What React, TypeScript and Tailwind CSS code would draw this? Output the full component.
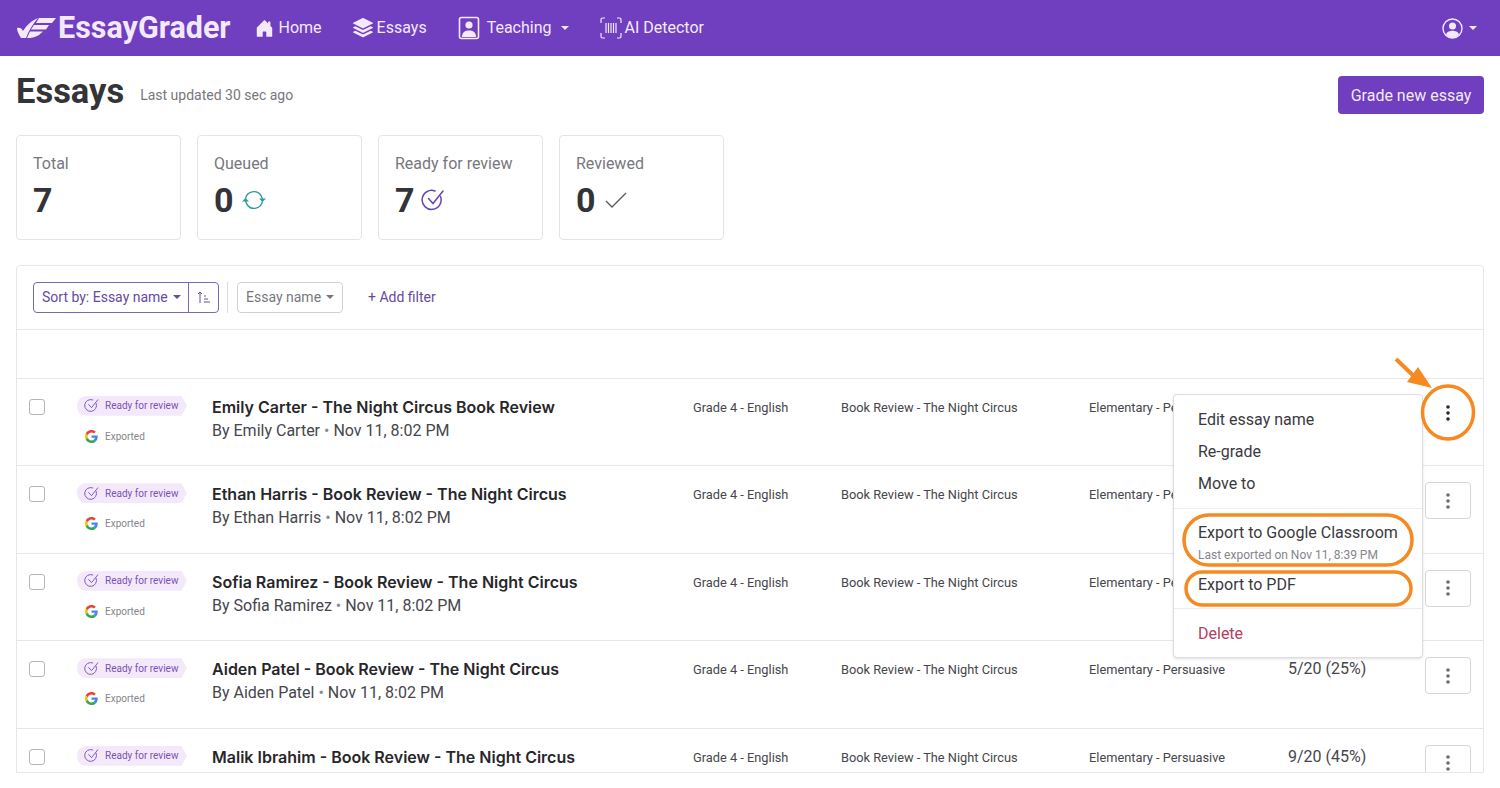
import { BsHouseDoorFill, BsStack } from 'react-icons/bs';

const essays = [
  { title: 'Emily Carter - The Night Circus Book Review', author: 'Emily Carter', score: '' },
  { title: 'Ethan Harris - Book Review - The Night Circus', author: 'Ethan Harris', score: '' },
  { title: 'Sofia Ramirez - Book Review - The Night Circus', author: 'Sofia Ramirez', score: '' },
  { title: 'Aiden Patel - Book Review - The Night Circus', author: 'Aiden Patel', score: '5/20 (25%)' },
  { title: 'Malik Ibrahim - Book Review - The Night Circus', author: 'Malik Ibrahim', score: '9/20 (45%)' },
];

const Caret = ({ className = '' }: { className?: string }) => (
  <span className={`inline-block w-0 h-0 border-x-[4.5px] border-x-transparent border-t-[4.5px] ${className}`} />
);

const Logo = () => (
  <svg width="40" height="22" viewBox="0 0 40 22" fill="#f3e9fb">
    <path d="M1 11C3 10 6 11 7 14C10 9 15 4 22 1C17 7 13 13 10 21L5 21C3 18 1 14 1 11Z" />
    <path d="M23 1H40L36 6H20Z" />
    <path d="M18 8H33L30 12.500H15Z" />
    <path d="M14 14.500H27L23 18C19 20.500 15 21 11 21Z" />
  </svg>
);

const TeachingIcon = () => (
  <svg width="22" height="24" viewBox="0 0 22 24" fill="none">
    <rect x="1.500" y="1.500" width="19" height="21" rx="2" stroke="#f3e9fb" strokeWidth="1.600" />
    <circle cx="11" cy="9" r="3.600" fill="#f3e9fb" />
    <path d="M4 21C4 16 7 14.500 11 14.500C15 14.500 18 16 18 21Z" fill="#f3e9fb" />
  </svg>
);

const DetectorIcon = () => (
  <svg width="22" height="22" viewBox="0 0 22 22" fill="none" stroke="#f3e9fb" strokeWidth="1.200">
    <path d="M5 1H2.500A1.500 1.500 0 0 0 1 2.500V6M17 1h2.500A1.500 1.500 0 0 1 21 2.500V6M5 21H2.500A1.500 1.500 0 0 1 1 19.500V16M17 21h2.500a1.500 1.500 0 0 0 1.500-1.500V16" />
    <path d="M6 6v10M8.500 6v10M11 6v10M13.500 6v10M16 6v10" />
  </svg>
);

const UserCircle = () => (
  <svg width="21" height="21" viewBox="0 0 21 21" fill="none">
    <circle cx="10.500" cy="10.500" r="9.500" stroke="#f3e9fb" strokeWidth="1.400" />
    <circle cx="10.500" cy="8" r="3.500" fill="#f3e9fb" />
    <path d="M4 16.500C5 13.500 8 12.800 10.500 12.800C13 12.800 16 13.500 17 16.500C15 19 12.500 20 10.500 20C8.500 20 6 19 4 16.500Z" fill="#f3e9fb" />
  </svg>
);

const CheckCircleIcon = ({ size, color }: { size: number; color: string }) => (
  <svg width={size} height={size} viewBox="0 0 24 24" fill="none" stroke={color} strokeWidth="1.500" strokeLinecap="round">
    <path d="M19.500 8.500A9.500 9.500 0 1 1 14 3" />
    <path d="M7.500 10.500l4.500 5L22 3" />
  </svg>
);

const SyncIcon = () => (
  <svg width="24" height="24" viewBox="0 0 24 24" fill="none" stroke="#2a9d9d" strokeWidth="1.400">
    <path d="M3.500 11A8.500 8.500 0 0 1 19 7.500L20.500 11" />
    <path d="M20.500 13A8.500 8.500 0 0 1 5 16.500L3.500 13" />
    <path d="M17 10.500h7l-3.500 3.500z" fill="#2a9d9d" stroke="none" />
    <path d="M0 13.500h7L3.500 10z" fill="#2a9d9d" stroke="none" />
  </svg>
);

const GoogleG = () => (
  <svg width="13" height="13" viewBox="0 0 48 48">
    <path fill="#EA4335" d="M24 9.500c3.500 0 6.700 1.300 9.100 3.500l6.800-6.800C35.800 2.400 30.300 0 24 0 14.600 0 6.500 5.400 2.600 13.200l7.900 6.100C12.400 13.700 17.700 9.500 24 9.500z" />
    <path fill="#4285F4" d="M46.900 24.500c0-1.600-.1-3.100-.4-4.500H24v9h12.900c-.6 3-2.200 5.500-4.800 7.200l7.700 6c4.500-4.200 7.100-10.300 7.100-17.700z" />
    <path fill="#FBBC05" d="M10.500 28.700c-.5-1.500-.8-3-.8-4.700s.3-3.200.8-4.700l-7.900-6.100C.9 16.500 0 20.100 0 24s.9 7.500 2.600 10.800l7.900-6.100z" />
    <path fill="#34A853" d="M24 48c6.500 0 11.900-2.100 15.900-5.800l-7.700-6c-2.200 1.400-4.900 2.300-8.200 2.300-6.300 0-11.600-4.200-13.500-9.800l-7.900 6.100C6.500 42.600 14.600 48 24 48z" />
  </svg>
);

const StatCard = ({ label, value, icon }: { label: string; value: string; icon?: React.ReactNode }) => (
  <div className="w-[165px] h-[105px] rounded border border-[#e4e4e7] pt-[18px] pl-4">
    <div className="text-[16px] leading-[20px] text-[#77777d]">{label}</div>
    <div className="mt-[7px] flex items-center gap-[8px] h-[38px]">
      <span className="text-[34px] leading-[38px] font-bold text-[#333338]">{value}</span>
      {icon}
    </div>
  </div>
);

const NavItem = ({ icon, label, caret, gap }: { icon: React.ReactNode; label: string; caret?: boolean; gap: string }) => (
  <div className={`flex items-center text-[16px] text-[#f3e9fb] ${gap}`}>
    {icon}
    <span>{label}</span>
    {caret && <Caret className="ml-[2px] border-t-[#f3e9fb]" />}
  </div>
);

const KebabDots = ({ color }: { color: string }) => (
  <svg width="4" height="16" viewBox="0 0 4 16" fill={color}>
    <circle cx="2" cy="2" r="1.800" />
    <circle cx="2" cy="8" r="1.800" />
    <circle cx="2" cy="14" r="1.800" />
  </svg>
);

const EssayRow = ({ title, author, score, first }: { title: string; author: string; score: string; first: boolean }) => (
  <div className="h-[87.5px] shrink-0 border-t border-[#e7e7ea] grid grid-cols-[48px_135px_481px_148px_248px_199px_137px_46px] pl-[12px]">
    <div className="pt-[20px]">
      <div className="w-[16px] h-[16px] rounded-[3px] border border-[#b4b4b9] bg-white" />
    </div>
    <div className="pt-[17px]">
      <div className="w-[110px] h-[20px] flex items-center gap-[6px] pl-[7px] rounded-l-[9px] bg-[#f4e9fb] [clip-path:polygon(0_0,95%_0,100%_50%,95%_100%,0_100%)]">
        <CheckCircleIcon size={15} color="#7a52b8" />
        <span className="text-[10px] text-[#7a52b8]">Ready for review</span>
      </div>
      <div className="mt-[11px] flex items-center gap-[7px] pl-[8px] h-[19px]">
        <GoogleG />
        <span className="text-[10px] text-[#85858b]">Exported</span>
      </div>
    </div>
    <div className="pt-[16px]">
      <div className="text-[16px] leading-[24px] font-semibold text-[#27272b] whitespace-nowrap font-['Inter',sans-serif]">{title}</div>
      <div className="text-[16px] leading-[24px] text-[#46464c] whitespace-nowrap">
        By {author} <span className="text-[#8a8a90]">•</span> Nov 11, 8:02 PM
      </div>
    </div>
    <div className="pt-[20px] text-[12.8px] leading-[17px] text-[#46464c]">Grade 4 - English</div>
    <div className="pt-[20px] text-[12.8px] leading-[17px] text-[#46464c]">Book Review - The Night Circus</div>
    <div className="pt-[20px] text-[12.8px] leading-[17px] text-[#46464c]">Elementary - Persuasive</div>
    <div className="pt-[18px] text-[16px] leading-[20px] text-[#46464c]">{score}</div>
    <div className="pt-[16px]">
      <div className={`w-[46px] h-[37px] rounded border flex items-center justify-center ${first ? 'border-transparent' : 'border-[#d6d6da]'}`}>
        <KebabDots color={first ? '#27272b' : '#6c6c72'} />
      </div>
    </div>
  </div>
);

const MenuItem = ({ label, sub, danger }: { label: string; sub?: string; danger?: boolean }) => (
  <div className="px-[24px]">
    <div className={`text-[16px] leading-[32px] ${danger ? 'text-[#b3415f]' : 'text-[#3a3a40]'}`}>{label}</div>
    {sub && <div className="text-[12px] leading-[12px] text-[#85858b]">{sub}</div>}
  </div>
);

export default function App() {
  return (
    <div className="relative h-[788px] w-[1500px] overflow-hidden bg-white font-['Roboto',sans-serif]">
      <header className="h-[56px] bg-[#703fc0] flex items-center pl-4 pr-[23px]">
        <Logo />
        <span className="ml-[2px] text-[30.5px] font-bold text-[#f3e9fb]">EssayGrader</span>
        <nav className="ml-[24px] flex items-center gap-[31px]">
          <NavItem icon={<BsHouseDoorFill size={19} />} label="Home" gap="gap-[5px]" />
          <NavItem icon={<BsStack size={20} />} label="Essays" gap="gap-[4px]" />
          <NavItem icon={<TeachingIcon />} label="Teaching" caret gap="gap-[7px]" />
          <NavItem icon={<DetectorIcon />} label="AI Detector" gap="gap-[3px]" />
        </nav>
        <div className="ml-auto flex items-center gap-[6px]">
          <UserCircle />
          <Caret className="border-t-[#f3e9fb]" />
        </div>
      </header>

      <main className="px-4">
        <div className="h-[79px] flex items-start justify-between">
          <div className="mt-[15px] flex items-center gap-4">
            <h1 className="text-[34.5px] leading-[40px] font-bold text-[#333338]">Essays</h1>
            <span className="mt-[8px] text-[14px] text-[#77777d]">Last updated 30 sec ago</span>
          </div>
          <button className="mt-[20px] h-[38px] w-[146px] rounded bg-[#703fc0] pt-[1px] text-[16px] text-[#f3e9fb]">Grade new essay</button>
        </div>

        <div className="flex gap-4">
          <StatCard label="Total" value="7" />
          <StatCard label="Queued" value="0" icon={<SyncIcon />} />
          <StatCard label="Ready for review" value="7" icon={<span className="-ml-[2px]"><CheckCircleIcon size={24} color="#6a45b0" /></span>} />
          <StatCard label="Reviewed" value="0" icon={<svg width="24" height="24" viewBox="0 0 24 24" fill="none" stroke="#5a5a60" strokeWidth="1.400"><path d="M2 13l6 6L22 5" /></svg>} />
        </div>

        <section className="mt-[25px] h-[508px] rounded-t border border-[#e7e7ea] overflow-hidden flex flex-col">
          <div className="h-[62.75px] shrink-0 flex items-center pl-4">
            <div className="flex h-[31px] rounded border border-[#7d66b3] text-[14px] text-[#654a9f]">
              <div className="w-[155px] flex items-center gap-[5px] pl-2 border-r border-[#7d66b3]">
                Sort by: Essay name <Caret className="border-t-[#654a9f]" />
              </div>
              <div className="w-[29px] flex items-center justify-center">
                <svg width="14" height="12" viewBox="0 0 14 12" fill="none" stroke="#654a9f" strokeWidth="1">
                  <path d="M3 12V1M1 3l2-2 2 2M7 5h2M7 8h4M7 11h6" />
                </svg>
              </div>
            </div>
            <div className="ml-2 w-px h-[31px] bg-[#dcdce0]" />
            <div className="ml-[9px] w-[106px] h-[31px] rounded border border-[#d0d0d4] flex items-center gap-[5px] pl-2 text-[14px] text-[#77777d]">
              Essay name <Caret className="border-t-[#77777d]" />
            </div>
            <span className="ml-[25px] text-[14px] text-[#654a9f]">+ Add filter</span>
          </div>
          <div className="h-[49px] shrink-0 border-t border-[#e7e7ea]" />
          {essays.map((e, i) => (
            <EssayRow key={e.author} title={e.title} author={e.author} score={e.score} first={i === 0} />
          ))}
        </section>
      </main>

      {/* open row menu */}
      <div className="absolute left-[1173px] top-[394px] w-[250px] h-[264px] rounded border border-[#dedee2] bg-white shadow-sm pt-[9px]">
        <MenuItem label="Edit essay name" />
        <MenuItem label="Re-grade" />
        <MenuItem label="Move to" />
        <div className="my-[8px] border-t border-[#eeeef0]" />
        <MenuItem label="Export to Google Classroom" sub="Last exported on Nov 11, 8:39 PM" />
        <div className="mt-[8px]" />
        <MenuItem label="Export to PDF" />
        <div className="mt-[7px] mb-[9px] border-t border-[#eeeef0]" />
        <MenuItem label="Delete" danger />
      </div>

      {/* orange annotations drawn on top of the screenshot */}
      <svg className="absolute left-0 top-0 pointer-events-none" width="1500" height="788" fill="none" stroke="#f58a22" strokeWidth="3.500">
        <ellipse cx="1448" cy="412.500" rx="25.500" ry="26.500" />
        <rect x="1184" y="515" width="228" height="50" rx="25" />
        <rect x="1186" y="572" width="225" height="33" rx="16.500" />
        <path d="M1396 359l25 24" strokeWidth="4" />
        <path d="M1432 388L1418 367L1407 382z" fill="#f58a22" stroke="none" />
      </svg>
    </div>
  );
}
